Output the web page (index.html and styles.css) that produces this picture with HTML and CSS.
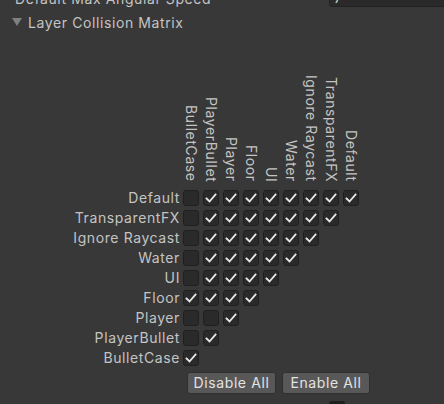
FILE: index.html
```html
<!DOCTYPE html>
<html>
<head>
<meta charset="utf-8">
<link rel="stylesheet" href="styles.css">
</head>
<body>
<div class="prop-row">
  <div class="prop-label">Default Max Angular Speed</div>
  <div class="prop-field">7</div>
</div>
<div class="foldout">
  <span class="tri"></span>
  <span class="foldout-label">Layer Collision Matrix</span>
</div>
<div class="matrix">
  <div class="mrow head">
    <div class="label"></div>
    <div class="col"><span>BulletCase</span></div>
    <div class="col"><span>PlayerBullet</span></div>
    <div class="col"><span>Player</span></div>
    <div class="col"><span>Floor</span></div>
    <div class="col"><span>UI</span></div>
    <div class="col"><span>Water</span></div>
    <div class="col"><span>Ignore Raycast</span></div>
    <div class="col"><span>TransparentFX</span></div>
    <div class="col"><span>Default</span></div>
  </div>
  <div class="mrow" data-row="Default" data-checks="011111111"></div>
  <div class="mrow" data-row="TransparentFX" data-checks="01111111"></div>
  <div class="mrow" data-row="Ignore Raycast" data-checks="0111111"></div>
  <div class="mrow" data-row="Water" data-checks="011111"></div>
  <div class="mrow" data-row="UI" data-checks="01111"></div>
  <div class="mrow" data-row="Floor" data-checks="1111"></div>
  <div class="mrow" data-row="Player" data-checks="001"></div>
  <div class="mrow" data-row="PlayerBullet" data-checks="01"></div>
  <div class="mrow" data-row="BulletCase" data-checks="1"></div>
</div>
<div class="buttons">
  <button class="btn btn-disable">Disable All</button>
  <button class="btn btn-enable">Enable All</button>
</div>
<div class="peek"></div>
<script>
document.querySelectorAll('.mrow[data-row]').forEach(function (row) {
  var label = document.createElement('div');
  label.className = 'label';
  label.textContent = row.dataset.row;
  row.appendChild(label);
  row.dataset.checks.split('').forEach(function (c) {
    var box = document.createElement('div');
    box.className = 'box';
    if (c === '1') {
      box.innerHTML = '<svg width="14" height="14" viewBox="0 0 14 14"><polyline points="2.5,7.5 5.5,10.5 11.5,3.5" fill="none" stroke="#e8e8e8" stroke-width="1.8" stroke-linecap="square" stroke-linejoin="miter"/></svg>';
    }
    row.appendChild(box);
  });
});
</script>
</body>
</html>
```

FILE: styles.css
```css
html, body {
  margin: 0;
  padding: 0;
}
body {
  background: #383838;
  font-family: Inter, "Noto Sans", "Liberation Sans", sans-serif;
  font-size: 14px;
  letter-spacing: 0.6px;
  color: #c4c4c4;
  width: 444px;
  height: 404px;
  overflow: hidden;
}
.prop-row {
  display: flex;
  align-items: center;
  height: 18px;
  margin-top: -11px;
  padding-left: 15px;
}
.prop-label {
  flex: 1;
}
.prop-field {
  width: 120px;
  height: 18px;
  margin-right: -5px;
  box-sizing: border-box;
  background: #2a2a2a;
  border: 1px solid #212121;
  border-radius: 3px;
  padding-left: 4px;
  line-height: 16px;
  color: #d0d0d0;
}
.foldout {
  display: flex;
  align-items: center;
  height: 18px;
  margin-top: 6px;
  padding-left: 12px;
}
.tri {
  width: 0;
  height: 0;
  border-left: 5px solid transparent;
  border-right: 5px solid transparent;
  border-top: 8px solid #808080;
  margin-right: 6px;
}
.matrix {
  display: flex;
  flex-direction: column;
  gap: 4px;
  margin-top: 39px;
}
.mrow {
  display: flex;
  gap: 4px;
  height: 16px;
}
.mrow.head {
  height: 116px;
  align-items: flex-end;
}
.label {
  width: 180px;
  text-align: right;
  line-height: 16px;
  white-space: nowrap;
  margin-right: -0.6px;
}
.col {
  width: 16px;
  display: flex;
  justify-content: center;
  padding-bottom: 4px;
}
.col span {
  writing-mode: vertical-rl;
  line-height: 16px;
  white-space: nowrap;
}
.box {
  width: 16px;
  height: 16px;
  box-sizing: border-box;
  background: #2a2a2a;
  border: 1px solid #1f1f1f;
  border-radius: 3px;
  display: flex;
  align-items: center;
  justify-content: center;
}
.box svg {
  display: block;
}
.buttons {
  display: flex;
  gap: 6px;
  margin-top: 6px;
  padding-left: 187px;
}
.btn {
  height: 22px;
  box-sizing: border-box;
  background: #585858;
  border: 1px solid #303030;
  border-radius: 3px;
  color: #e2e2e2;
  font-family: inherit;
  font-size: 14px;
  letter-spacing: 0.6px;
  padding: 0;
  line-height: 20px;
  text-align: center;
}
.btn-disable {
  width: 89px;
}
.btn-enable {
  width: 88px;
}
.peek {
  width: 16px;
  height: 8px;
  margin-left: 329px;
  margin-top: 7px;
  background: #1f1f1f;
  border-radius: 3px;
}
```
